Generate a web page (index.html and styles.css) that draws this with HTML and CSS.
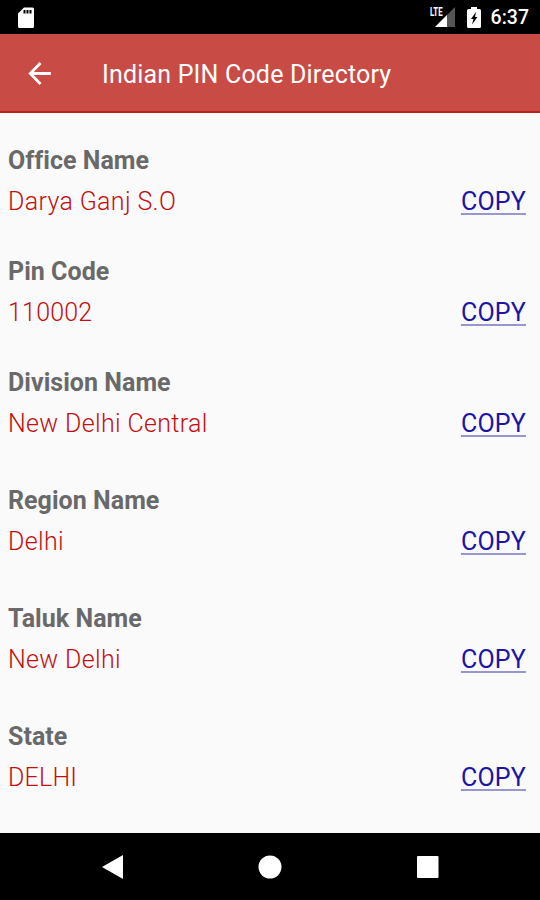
FILE: index.html
```html
<!DOCTYPE html>
<html lang="en">
<head>
<meta charset="utf-8">
<title>Indian PIN Code Directory</title>
<link rel="stylesheet" href="styles.css">
</head>
<body>
<div class="status">
  <svg class="sd" width="17" height="21" viewBox="0 0 17 21"><path fill="#fff" fill-rule="evenodd" d="M6 0.500H14.500Q16 0.500 16 2V19.500Q16 21 14.500 21H1.500Q0 21 0 19.500V6.500ZM5.500 3V6.500H7.500V3ZM8.500 3V6.500H10.500V3ZM11.500 3V6.500H13.500V3Z"/></svg>
  <div class="right">
    <div class="signal"><span class="lte">LTE</span><svg width="20" height="20" viewBox="0 0 20 20"><path fill="#555" d="M20 0V20H0Z"/><path fill="#fff" d="M12 8V20H0Z"/></svg></div>
    <svg class="battery" width="14" height="21" viewBox="0 0 14 21"><path fill="#fff" fill-rule="evenodd" d="M4 0H10V2H12.500Q14 2 14 3.500V19.500Q14 21 12.500 21H1.500Q0 21 0 19.500V3.500Q0 2 1.500 2H4ZM9 5L4 12H6.500L5 17.500L10.500 10H8Z"/></svg>
    <span class="time">6:37</span>
  </div>
</div>
<header class="bar">
  <svg class="back" width="23" height="23" viewBox="0 0 23 23"><path fill="none" stroke="#fff" stroke-width="2.800" d="M22.800 11.500H2.500M12.500 1L2.300 11.500L12.500 22"/></svg>
  <h1>Indian PIN Code Directory</h1>
</header>
<main>
  <section><h2>Office Name</h2><div class="row"><span>Darya Ganj S.O</span><a>COPY</a></div></section>
  <section><h2>Pin Code</h2><div class="row"><span class="caps">110002</span><a>COPY</a></div></section>
  <section class="tall"><h2>Division Name</h2><div class="row"><span>New Delhi Central</span><a>COPY</a></div></section>
  <section class="tall"><h2>Region Name</h2><div class="row"><span>Delhi</span><a>COPY</a></div></section>
  <section class="tall"><h2>Taluk Name</h2><div class="row"><span>New Delhi</span><a>COPY</a></div></section>
  <section class="tall"><h2>State</h2><div class="row"><span class="caps">DELHI</span><a>COPY</a></div></section>
</main>
<nav>
  <svg width="24" height="26" viewBox="0 0 24 26"><path fill="#fff" d="M23 1V25L2 13Z"/></svg>
  <svg width="24" height="24" viewBox="0 0 24 24"><circle cx="12" cy="12" r="11.500" fill="#fff"/></svg>
  <svg width="24" height="24" viewBox="0 0 24 24"><rect x="1" y="1" width="21.500" height="22" rx="1" fill="#fff"/></svg>
</nav>
</body>
</html>
```
FILE: styles.css
```css
* { box-sizing: border-box; }
body { margin: 0; width: 540px; height: 900px; display: flex; flex-direction: column; background: #fafafa; font-family: Roboto, sans-serif; overflow: hidden; }
.status { height: 34px; flex: none; background: #000; display: flex; align-items: center; justify-content: space-between; padding: 0 11px 0 18px; color: #fff; }
.right { display: flex; align-items: center; }
.signal { display: flex; position: relative; width: 25px; justify-content: flex-end; margin-right: 12px; }
.lte { position: absolute; left: 0; top: 1px; font-size: 12px; line-height: 9px; font-weight: 700; transform: scaleX(.65); transform-origin: left; }
.battery { margin-right: 10px; }
.time { font-size: 19.5px; font-weight: 500; line-height: 34px; padding-top: 2px; }
.bar { height: 79px; flex: none; background: #c94b46; border-bottom: 2px solid #b9211e; display: flex; align-items: center; padding-left: 28px; color: #fff; }
.back { margin: 2px 51px 0 0; }
h1 { margin: 4px 0 0; font-size: 25px; font-weight: 400; letter-spacing: .18px; }
main { flex: 1; min-height: 0; padding: 27px 14px 0 8px; }
section { height: 111px; }
.tall { height: 118px; }
.tall:last-child { height: 90px; }
h2 { margin: 0; height: 41px; line-height: 42px; font-size: 25px; font-weight: 700; letter-spacing: .04px; color: #696969; }
.row { display: flex; justify-content: space-between; font-size: 25px; font-weight: 300; letter-spacing: .34px; line-height: 42px; color: #c30f0f; }
.row .caps { letter-spacing: .2px; }
.row a { font-weight: 400; letter-spacing: .2px; color: #1c15a5; text-decoration: underline; text-decoration-thickness: 2px; text-decoration-color: #9896cf; text-underline-offset: 3px; }
nav { height: 67px; flex: none; background: #000; display: flex; align-items: center; justify-content: space-between; padding: 0 100px 0 100px; }
```
